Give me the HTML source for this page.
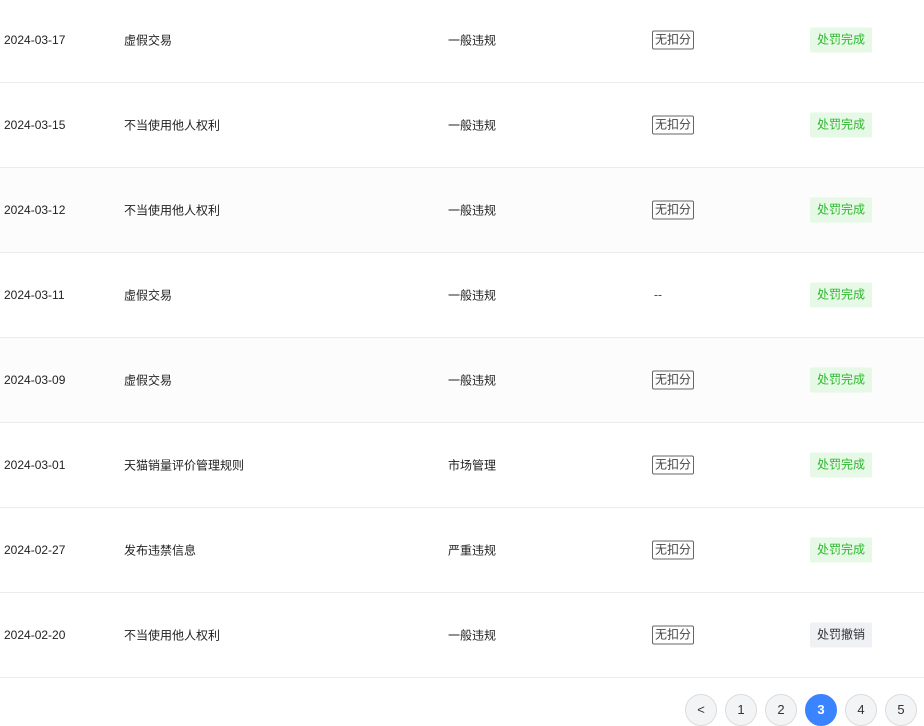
<!DOCTYPE html><html><head><meta charset="utf-8"><style>
body{margin:0;width:924px;height:723px;overflow:hidden;background:#fff;font-family:"Liberation Sans","Noto Sans CJK SC",sans-serif;font-size:12px;color:#222;position:relative}
.row{position:absolute;left:0;width:924px;height:84px;border-bottom:1px solid #ececec}
.row span{position:absolute;top:50%;transform:translateY(-50%)}
.d{left:4px}.t{left:124px}.c{left:448px}
.k{left:652px;border:1px solid #666;border-radius:2px;padding:1px 2px;line-height:15px;color:#444}
.s{left:810px;width:62px;height:25px;line-height:25px;text-align:center;background:#e6f8e6;color:#2eb82e;border-radius:2px}
.s.g{background:#f0f1f4;color:#333}
.p{position:absolute;top:694px;width:30px;height:30px;border:1px solid #dcdcdc;border-radius:50%;background:#f3f4f6;text-align:center;line-height:30px;font-size:13px;color:#333}
.p.a{background:#3a84ff;border-color:#3a84ff;color:#fff;font-weight:bold}
</style></head><body>
<div class="row" style="top:-2px"><span class="d">2024-03-17</span><span class="t">虚假交易</span><span class="c">一般违规</span><span class="k">无扣分</span><span class="s">处罚完成</span></div>
<div class="row" style="top:83px"><span class="d">2024-03-15</span><span class="t">不当使用他人权利</span><span class="c">一般违规</span><span class="k">无扣分</span><span class="s">处罚完成</span></div>
<div class="row" style="top:168px;background:#fcfcfc"><span class="d">2024-03-12</span><span class="t">不当使用他人权利</span><span class="c">一般违规</span><span class="k">无扣分</span><span class="s">处罚完成</span></div>
<div class="row" style="top:253px"><span class="d">2024-03-11</span><span class="t">虚假交易</span><span class="c">一般违规</span><span class="k" style="border:none">--</span><span class="s">处罚完成</span></div>
<div class="row" style="top:338px;background:#fcfcfc"><span class="d">2024-03-09</span><span class="t">虚假交易</span><span class="c">一般违规</span><span class="k">无扣分</span><span class="s">处罚完成</span></div>
<div class="row" style="top:423px"><span class="d">2024-03-01</span><span class="t">天猫销量评价管理规则</span><span class="c">市场管理</span><span class="k">无扣分</span><span class="s">处罚完成</span></div>
<div class="row" style="top:508px"><span class="d">2024-02-27</span><span class="t">发布违禁信息</span><span class="c">严重违规</span><span class="k">无扣分</span><span class="s">处罚完成</span></div>
<div class="row" style="top:593px"><span class="d">2024-02-20</span><span class="t">不当使用他人权利</span><span class="c">一般违规</span><span class="k">无扣分</span><span class="s g">处罚撤销</span></div>
<div class="p" style="left:685px">&lt;</div>
<div class="p" style="left:725px">1</div>
<div class="p" style="left:765px">2</div>
<div class="p a" style="left:805px">3</div>
<div class="p" style="left:845px">4</div>
<div class="p" style="left:885px">5</div>
</body></html>
